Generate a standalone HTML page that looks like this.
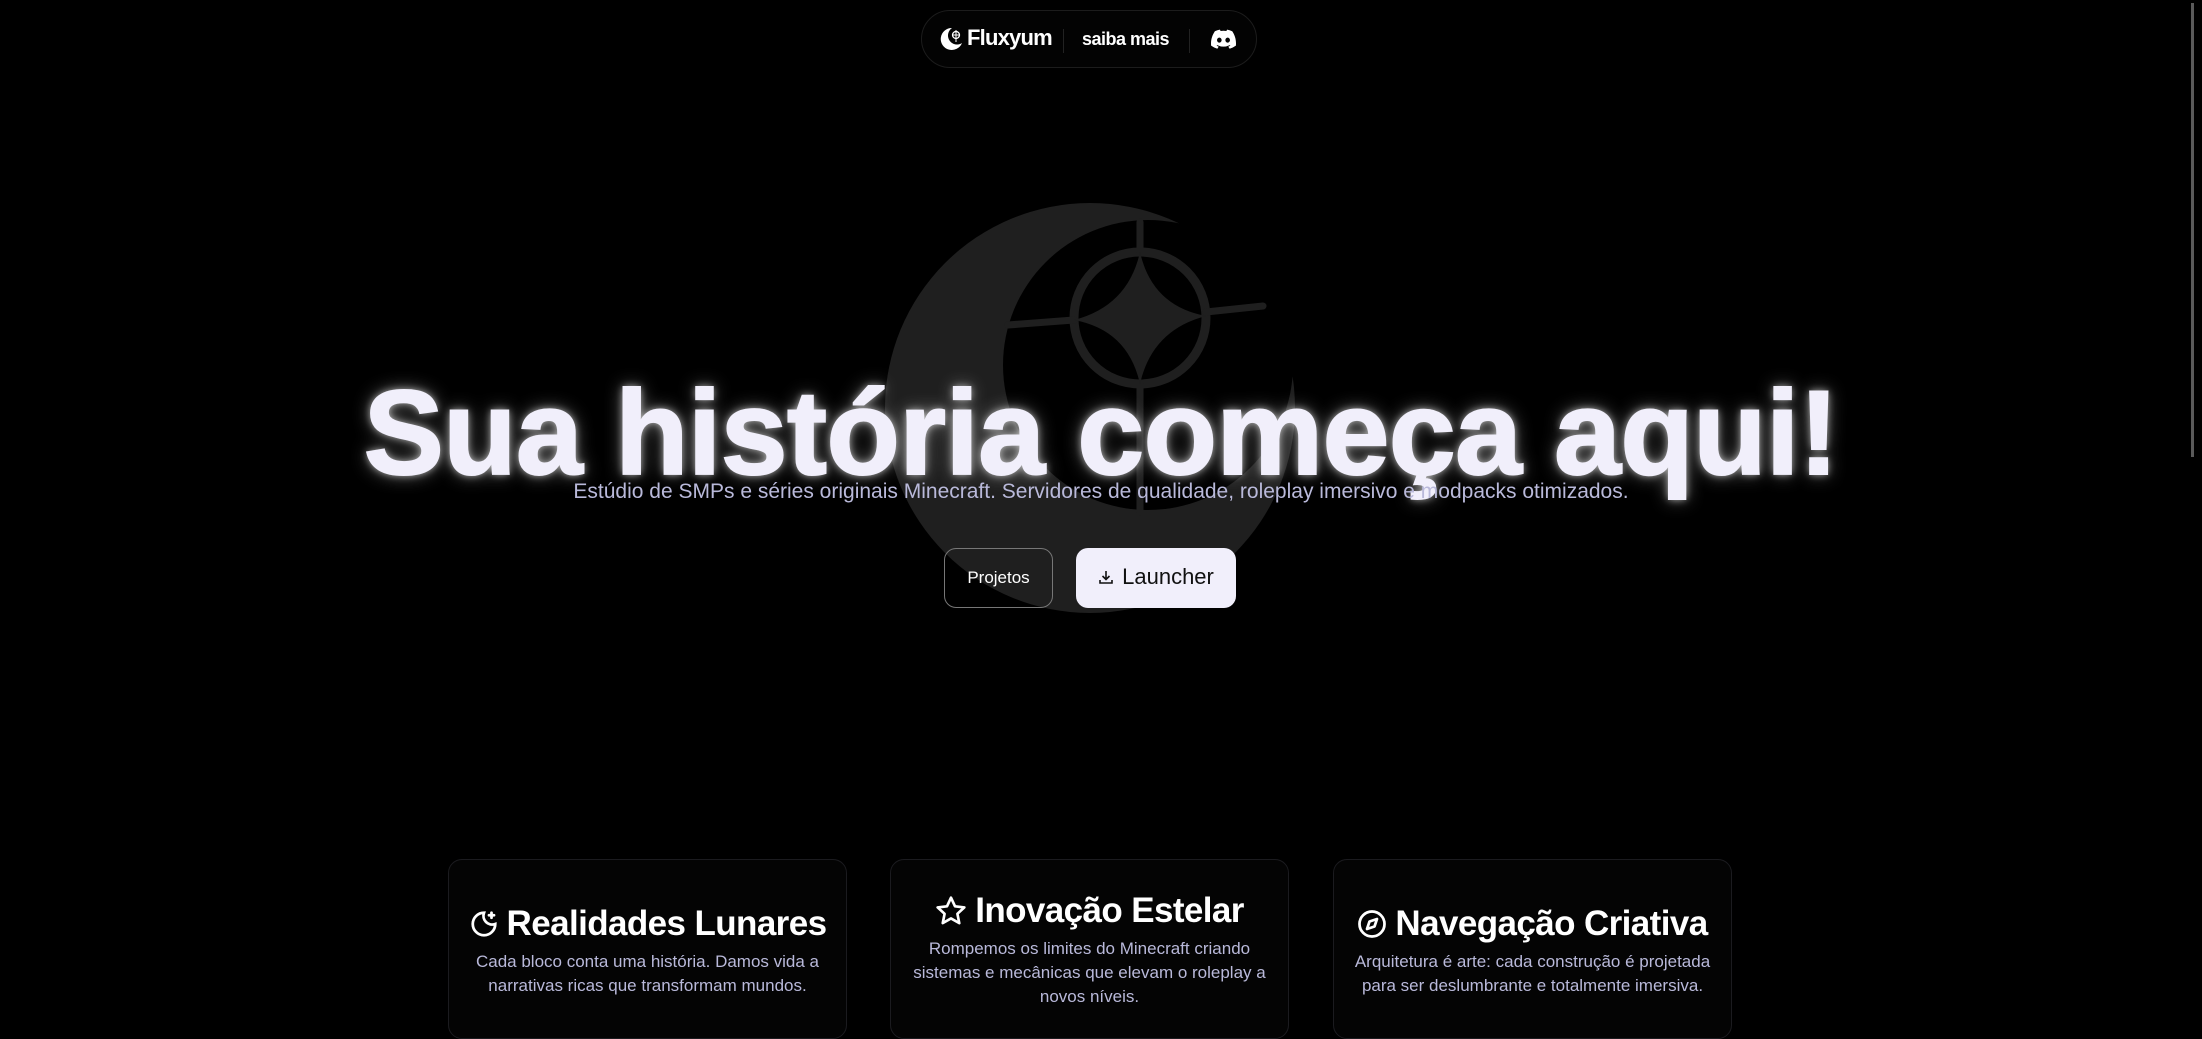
<!DOCTYPE html>
<html><head><meta charset="utf-8">
<style>
html,body{margin:0;padding:0;background:#000;width:2202px;height:1001px;overflow:hidden;font-family:"Liberation Sans",sans-serif;color:#f0eefa}
.nav{position:absolute;left:921px;top:10px;width:334px;height:56px;border:1px solid #1c1c1c;border-radius:30px;background:#030303}
.nav .logo{position:absolute;left:16px;top:15px}
.nav .brand{position:absolute;left:45px;top:14px;font-weight:bold;font-size:22px;letter-spacing:-0.8px;color:#fff}
.nav .sep{position:absolute;top:18px;width:1px;height:24px;background:#222}
.nav .saiba{position:absolute;left:160px;top:18px;font-weight:bold;font-size:18px;letter-spacing:-0.5px;color:#fff}
.nav .disc{position:absolute;left:289px;top:18px}
h1{position:absolute;left:0;width:2202px;top:361px;margin:0;text-align:center;font-size:120px;font-weight:bold;letter-spacing:-0.5px;color:#f1effb;line-height:1.2;-webkit-text-stroke:2px #f1effb;
text-shadow:0 0 8px rgba(255,255,255,.7),0 0 18px rgba(255,255,255,.45)}
.sub{position:absolute;left:0;width:2202px;top:480px;text-align:center;font-size:21px;color:#b9b9da}
.b1{position:absolute;left:944px;top:548px;width:109px;height:60px;border:1px solid #777;border-radius:12px;box-sizing:border-box;font-size:17px;color:#fff;text-align:center;line-height:58px}
.b2{position:absolute;left:1076px;top:548px;width:160px;height:60px;border-radius:12px;background:#f1effb;color:#111;font-size:22px;line-height:58px;text-align:center}
.card{position:absolute;top:859px;width:399px;height:180px;border:1px solid #1b1b1f;border-radius:14px;background:#040404;box-sizing:border-box;text-align:center}
.card h2{margin:0;font-size:35px;font-weight:bold;letter-spacing:-0.6px;color:#fff;display:flex;align-items:center;justify-content:center;gap:8px}
.card p{margin:6px 0 0;font-size:17px;line-height:24px;color:#b9b9da}
.sb{position:absolute;left:2191px;top:3px;width:3px;height:454px;background:#5a5a5a}
</style></head><body>
<svg style="position:absolute;left:0;top:0" width="2202" height="1001">
  <defs><mask id="m"><rect width="2202" height="1001" fill="#fff"/><circle cx="1148" cy="365" r="145" fill="#000"/></mask></defs>
  <circle cx="1090" cy="408" r="205" fill="#1f1f1f" mask="url(#m)"/>
  <g stroke="#1f1f1f" fill="none" stroke-linecap="round">
    <circle cx="1140" cy="318" r="66" stroke-width="9"/>
    <path d="M1008 325 L1074 320 M1206 312 L1263 306" stroke-width="7"/>
    <path d="M1140 222 L1140 252 M1140 384 L1140 512" stroke-width="7"/>
  </g>
  <path d="M1140 252 Q1152 306 1206 316 Q1152 330 1140 384 Q1128 330 1074 320 Q1128 306 1140 252Z" fill="#1f1f1f"/>
</svg>
<div class="nav">
  <svg class="logo" width="26" height="26" viewBox="0 0 26 26"><path d="M14 2A11 11 0 1 0 24 17A8.5 8.5 0 1 1 14 2Z" fill="#fff"/><circle cx="18" cy="9" r="3.5" fill="none" stroke="#fff" stroke-width="1.3"/><path d="M18 4v12M14 9h8" stroke="#fff" stroke-width="1"/></svg>
  <div class="brand">Fluxyum</div>
  <div class="sep" style="left:141px"></div>
  <div class="saiba">saiba mais</div>
  <div class="sep" style="left:267px"></div>
  <svg class="disc" width="25" height="20" viewBox="0 0 24 18"><path d="M20.3 1.5A19.8 19.8 0 0 0 15.4 0l-.6 1.3a18 18 0 0 0-5.6 0L8.6 0a19.7 19.7 0 0 0-4.9 1.5C.6 6.2-.3 10.8.1 15.3a20 20 0 0 0 6 3l1.3-2a13 13 0 0 1-2-1l.5-.4a14.2 14.2 0 0 0 12.2 0l.5.4a13 13 0 0 1-2 1l1.3 2a20 20 0 0 0 6-3c.5-5.2-.9-9.8-3.6-13.8zM8 12.5c-1.2 0-2.2-1.1-2.2-2.4S6.8 7.7 8 7.7s2.2 1.1 2.2 2.4-1 2.4-2.2 2.4zm8 0c-1.2 0-2.2-1.1-2.2-2.4s1-2.4 2.2-2.4 2.2 1.1 2.2 2.4-1 2.4-2.2 2.4z" fill="#fff"/></svg>
</div>
<h1>Sua história começa aqui!</h1>
<div class="sub">Estúdio de SMPs e séries originais Minecraft. Servidores de qualidade, roleplay imersivo e modpacks otimizados.</div>
<div class="b1">Projetos</div>
<div class="b2"><svg width="16" height="16" viewBox="0 0 16 16" style="vertical-align:-1px;margin-right:8px"><path d="M8 2v8M4.5 7L8 10.5 11.5 7M2 11v3h12v-3" fill="none" stroke="#111" stroke-width="1.6"/></svg>Launcher</div>

<div class="card" style="left:448px;padding-top:44px">
  <h2><svg width="30" height="30" viewBox="0 0 24 24" fill="none" stroke="#fff" stroke-width="2.2" stroke-linecap="round"><path d="M12 3a9 9 0 1 0 9 9 7 7 0 0 1-9-9z"/><path d="M18 3v4M16 5h4"/></svg>Realidades Lunares</h2>
  <p>Cada bloco conta uma história. Damos vida a<br>narrativas ricas que transformam mundos.</p>
</div>
<div class="card" style="left:890px;padding-top:31px">
  <h2><svg width="32" height="32" viewBox="0 0 24 24" fill="none" stroke="#fff" stroke-width="2" stroke-linejoin="round"><path d="M12 2l3 6.5 7 .8-5.2 4.8 1.4 7L12 17.6 5.8 21.1l1.4-7L2 9.3l7-.8z"/></svg>Inovação Estelar</h2>
  <p>Rompemos os limites do Minecraft criando<br>sistemas e mecânicas que elevam o roleplay a<br>novos níveis.</p>
</div>
<div class="card" style="left:1333px;padding-top:44px">
  <h2><svg width="30" height="30" viewBox="0 0 24 24" fill="none" stroke="#fff" stroke-width="2.2" stroke-linejoin="round"><circle cx="12" cy="12" r="10"/><path d="M16 8l-2 6-6 2 2-6z"/></svg>Navegação Criativa</h2>
  <p>Arquitetura é arte: cada construção é projetada<br>para ser deslumbrante e totalmente imersiva.</p>
</div>
<div class="sb"></div>
</body></html>
